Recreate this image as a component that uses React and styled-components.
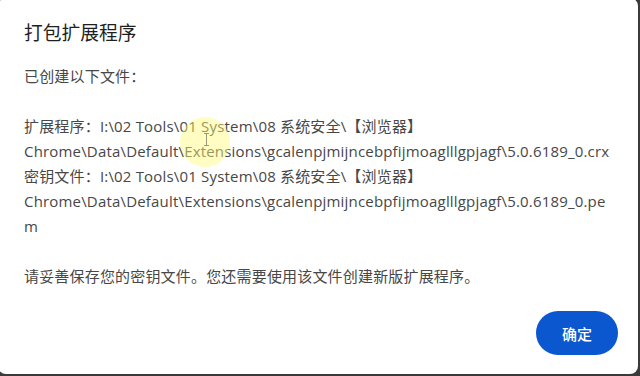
import React from "react";
import styled, { createGlobalStyle } from "styled-components";

const Global = createGlobalStyle`
  html, body { margin: 0; padding: 0; width: 640px; height: 376px; overflow: hidden; background: #3a3a3a; }
  #root { width: 640px; height: 376px; }
`;

const Dialog = styled.div`
  position: relative;
  box-sizing: border-box;
  width: 640px;
  height: 376px;
  margin: -2px 0 0 -2px;
  background: #fff;
  border-radius: 8px;
  padding: 21px 20px 20px 26px;
  display: flex;
  flex-direction: column;
  font-family: "Open Sans", "Noto Sans CJK SC", sans-serif;
`;

const Title = styled.h1`
  margin: 0;
  font-size: 18.75px;
  line-height: 26px;
  font-weight: 400;
  color: #1f1f1f;
  font-family: "Noto Sans CJK SC", sans-serif;
`;

const Body = styled.div`
  margin-top: 19px;
  width: 590px;
  font-size: 15px;
  line-height: 25px;
  letter-spacing: 0.18px;
  color: #474747;
  white-space: pre-wrap;
  overflow-wrap: anywhere;
  flex: 1;
`;

const Footer = styled.div`
  display: flex;
  justify-content: flex-end;
`;

const Button = styled.button`
  width: 82px;
  height: 44px;
  margin-bottom: -1px;
  border: none;
  border-radius: 22px;
  background: #0b57d0;
  color: #fff;
  font-size: 15px;
  font-weight: 500;
  font-family: "Noto Sans CJK SC", sans-serif;
`;

const Highlight = styled.div`
  position: absolute;
  left: 182px;
  top: 119px;
  width: 50px;
  height: 50px;
  border-radius: 50%;
  background: rgba(255, 250, 120, 0.45);
  pointer-events: none;
`;

const Cursor = styled.div`
  position: absolute;
  left: 208px;
  top: 135px;
  width: 1px;
  height: 13px;
  background: #9a9a7a;
  &::before, &::after {
    content: "";
    position: absolute;
    left: -2px;
    width: 5px;
    height: 1px;
    background: #9a9a7a;
  }
  &::before { top: 0; }
  &::after { bottom: 0; }
`;

const text = `已创建以下文件：

扩展程序：I:\\02 Tools\\01 System\\08 系统安全\\【浏览器】 Chrome\\Data\\Default\\Extensions\\gcalenpjmijncebpfijmoaglllgpjagf\\5.0.6189_0.crx
密钥文件：I:\\02 Tools\\01 System\\08 系统安全\\【浏览器】 Chrome\\Data\\Default\\Extensions\\gcalenpjmijncebpfijmoaglllgpjagf\\5.0.6189_0.pem

请妥善保存您的密钥文件。您还需要使用该文件创建新版扩展程序。`;

export default function App() {
  return (
    <>
      <Global />
      <Dialog>
        <Title>打包扩展程序</Title>
        <Body>{text}</Body>
        <Footer>
          <Button>确定</Button>
        </Footer>
        <Highlight />
        <Cursor />
      </Dialog>
    </>
  );
}
